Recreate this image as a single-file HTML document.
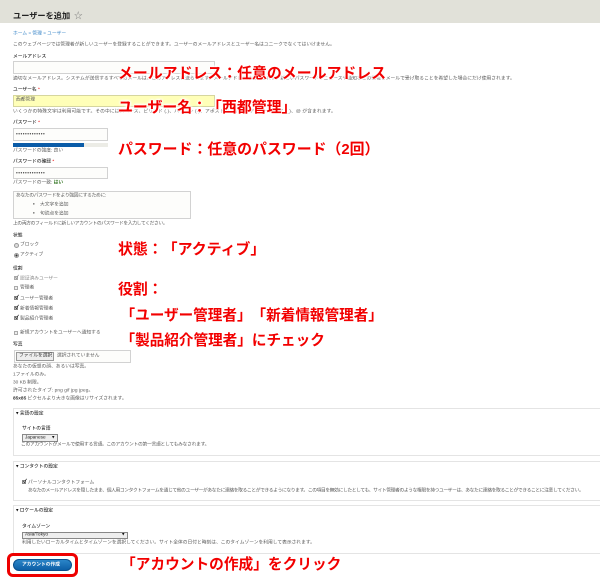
<!DOCTYPE html>
<html lang="ja"><head><meta charset="utf-8"><title>ユーザーを追加</title>
<style>
html,body{margin:0;padding:0;background:#fff}
#p{position:relative;width:600px;height:584px;overflow:hidden;background:#fff;font-family:"Liberation Sans","Noto Sans CJK JP",sans-serif;text-spacing-trim:space-all}
#s{position:absolute;inset:0;filter:blur(.35px)}
#s div{position:absolute;box-sizing:border-box}
.t{font-size:4.75px;line-height:8px;height:8px;white-space:nowrap;color:#5a5a5a;transform:translateY(.7px)}
.l{color:#333;font-weight:500}
.in{border:1.4px solid #d2d2d2;background:#fdfdfb}
.fs{left:13px;width:600px;border:1.3px solid #e4e4e4;border-right:0}
.cb{width:4px;height:4px;border:.6px solid #888;background:#eee;font-size:5.5px;line-height:3px;color:#111;font-weight:700}
.r{position:absolute;font-size:14.9px;line-height:20px;height:20px;font-weight:700;color:#f20000;white-space:nowrap;text-shadow:0 0 2px #fff,0 0 2px #fff,0 0 3px #fff,0 0 3px #fff,0 0 3px #fff}
</style></head><body><div id="p"><div id="s">
<div style="left:0;top:0;width:600px;height:23px;background:#e1e1d9"></div>
<div class="t" style="left:13px;top:11px;height:10px;line-height:10px;font-size:8.2px;font-weight:700;color:#222">ユーザーを追加</div>
<div class="t" style="left:74px;top:10px;height:10px;line-height:10px;font-size:8.5px;color:#777">☆</div>
<div class="t" style="left:13px;top:30px;color:#3a86c8">ホーム » 管理 » ユーザー</div>
<div class="t" style="left:13px;top:41px">このウェブページでは管理者が新しいユーザーを登録することができます。ユーザーのメールアドレスとユーザー名はユニークでなくてはいけません。</div>

<div class="t l" style="left:13px;top:53px">メールアドレス</div>
<div class="in" style="left:13px;top:61px;width:202px;height:13px"></div>
<div class="t" style="left:13px;top:75px;letter-spacing:.05px">適切なメールアドレス。システムが送信するすべてのメールは、このアドレスに送られます。メールアドレスは公開されず、新しいパスワードやニュースや通知などの情報をメールで受け取ることを希望した場合にだけ使用されます。</div>

<div class="t l" style="left:13px;top:86px">ユーザー名 <span style="color:#e00">*</span></div>
<div class="in" style="left:13px;top:95px;width:202px;height:12px;background:#ffffb8;border-color:#d6d69e"></div>
<div class="t" style="left:16px;top:96px">西都管理</div>
<div class="t" style="left:13px;top:108px;letter-spacing:.12px">いくつかの特殊文字は利用可能です。その中にはスペース、ピリオド (.)、ハイフン (-)、アポストロフィ (')、アンダースコア (_)、@ が含まれます。</div>

<div class="t l" style="left:13px;top:119px">パスワード <span style="color:#e00">*</span></div>
<div class="in" style="left:13px;top:128px;width:95px;height:13px"></div>
<div class="t" style="left:16px;top:130px;letter-spacing:.5px;font-size:5px;color:#444">•••••••••••••</div>
<div style="left:13px;top:143px;width:95px;height:4px;background:#ececE6"></div>
<div style="left:13px;top:143px;width:71px;height:4px;background:#0b5ca8"></div>
<div class="t" style="left:13px;top:147px">パスワードの強度: 良い</div>

<div class="t l" style="left:13px;top:158px">パスワードの確認 <span style="color:#e00">*</span></div>
<div class="in" style="left:13px;top:167px;width:95px;height:12px"></div>
<div class="t" style="left:16px;top:169px;letter-spacing:.5px;font-size:5px;color:#444">•••••••••••••</div>
<div class="t" style="left:13px;top:179px">パスワードの一致: <b style="color:#3a7a2a">はい</b></div>

<div class="in" style="left:13px;top:191px;width:178px;height:28px"></div>
<div class="t" style="left:16px;top:192px;letter-spacing:-.3px">あなたのパスワードをより強固にするために:</div>
<div class="t" style="left:33px;top:201px;color:#222">•</div>
<div class="t" style="left:40px;top:201px">大文字を追加</div>
<div class="t" style="left:33px;top:210px;color:#222">•</div>
<div class="t" style="left:40px;top:210px">句読点を追加</div>
<div class="t" style="left:13px;top:220px;letter-spacing:-.33px">上の両方のフィールドに新しいアカウントのパスワードを入力してください。</div>

<div class="t l" style="left:13px;top:232px">状態</div>
<div style="left:14px;top:243px;width:5px;height:5px;border-radius:50%;border:.7px solid #999;background:#ddd"></div>
<div class="t" style="left:20px;top:241px">ブロック</div>
<div style="left:14px;top:253px;width:5px;height:5px;border-radius:50%;border:.7px solid #999;background:radial-gradient(#333 45%,#ddd 55%)"></div>
<div class="t" style="left:20px;top:251px">アクティブ</div>

<div class="t l" style="left:13px;top:265px">役割</div>
<div class="cb" style="left:14px;top:276px;color:#888;border-color:#aaa">✓</div>
<div class="t" style="left:20px;top:275px;color:#888">認証済みユーザー</div>
<div class="cb" style="left:14px;top:286px;border-color:#aaa"></div>
<div class="t" style="left:20px;top:284px">管理者</div>
<div class="cb" style="left:14px;top:296px">✓</div>
<div class="t" style="left:20px;top:295px">ユーザー管理者</div>
<div class="cb" style="left:14px;top:306px">✓</div>
<div class="t" style="left:20px;top:305px">新着情報管理者</div>
<div class="cb" style="left:14px;top:316px">✓</div>
<div class="t" style="left:20px;top:315px">製品紹介管理者</div>
<div class="cb" style="left:14px;top:331px;border-color:#aaa"></div>
<div class="t" style="left:20px;top:329px">新規アカウントをユーザーへ通知する</div>

<div class="t l" style="left:13px;top:341px">写真</div>
<div class="in" style="left:14px;top:350px;width:117px;height:13px"></div>
<div style="left:16px;top:352px;width:38px;height:9px;background:#eee;border:.7px solid #999"></div>
<div class="t" style="left:19px;top:352px;color:#333">ファイルを選択</div>
<div class="t" style="left:57px;top:352px">選択されていません</div>
<div class="t" style="left:13px;top:363px">あなたの仮想の顔、あるいは写真。</div>
<div class="t" style="left:13px;top:371px">1ファイルのみ。</div>
<div class="t" style="left:13px;top:379px">30 KB 制限。</div>
<div class="t" style="left:13px;top:387px;letter-spacing:.1px">許可されたタイプ: png gif jpg jpeg。</div>
<div class="t" style="left:13px;top:395px"><b style="color:#333">85x85</b> ピクセルより大きな画像はリサイズされます。</div>

<div class="fs" style="top:408px;height:48px"></div>
<div class="t l" style="left:16px;top:410px"><span style="color:#111">▾</span> 言語の設定</div>
<div class="t l" style="left:22px;top:425px">サイトの言語</div>
<div style="left:22px;top:434px;width:36px;height:8px;background:#eee;border:.7px solid #888"></div>
<div class="t" style="left:25px;top:434px;color:#222">Japanese</div>
<div class="t" style="left:52px;top:434px;color:#111">▾</div>
<div class="t" style="left:21px;top:441px;letter-spacing:-.25px">このアカウントがメールで使用する言語。このアカウントの第一言語としてもみなされます。</div>

<div class="fs" style="top:461px;height:40px"></div>
<div class="t l" style="left:16px;top:463px"><span style="color:#111">▾</span> コンタクトの設定</div>
<div class="cb" style="left:22px;top:480px">✓</div>
<div class="t" style="left:28px;top:479px">パーソナルコンタクトフォーム</div>
<div class="t" style="left:28px;top:487px;letter-spacing:-.36px">あなたのメールアドレスを隠したまま、個人用コンタクトフォームを通じて他のユーザーがあなたに連絡を取ることができるようになります。この項目を無効にしたとしても、サイト管理者のような権限を持つユーザーは、あなたに連絡を取ることができることに注意してください。</div>

<div class="fs" style="top:505px;height:49px"></div>
<div class="t l" style="left:16px;top:507px"><span style="color:#111">▾</span> ロケールの設定</div>
<div class="t l" style="left:22px;top:523px">タイムゾーン</div>
<div style="left:22px;top:532px;width:106px;height:7px;background:#eee;border:.7px solid #888"></div>
<div class="t" style="left:25px;top:531px;color:#222">Asia/Tokyo</div>
<div class="t" style="left:122px;top:531px;color:#111">▾</div>
<div class="t" style="left:22px;top:539px">利用したいローカルタイムとタイムゾーンを選択してください。サイト全体の日付と時刻は、このタイムゾーンを利用して表示されます。</div>

<div style="left:13px;top:559px;width:59px;height:12px;border-radius:6px;background:linear-gradient(#2a85c8,#0c5fa6);border:.7px solid #0a4f8c"></div>
<div class="t" style="left:22px;top:561px;color:#fff;font-weight:700">アカウントの作成</div>
<div style="left:7px;top:553px;width:71px;height:24px;border:3px solid #ee0000;border-radius:6px"></div>
</div>

<div class="r" style="left:118px;top:64px">メールアドレス：任意のメールアドレス</div>
<div class="r" style="left:118px;top:98px">ユーザー名：「西都管理」</div>
<div class="r" style="left:118px;top:139.5px">パスワード：任意のパスワード（2回）</div>
<div class="r" style="left:118px;top:239.5px">状態：「アクティブ」</div>
<div class="r" style="left:118px;top:280px">役割：</div>
<div class="r" style="left:120.5px;top:306px;font-size:14.6px">「ユーザー管理者」「新着情報管理者」</div>
<div class="r" style="left:120.5px;top:331px;font-size:14.6px">「製品紹介管理者」にチェック</div>
<div class="r" style="left:121px;top:555px;font-size:14.7px">「アカウントの作成」をクリック</div>
</div></body></html>
